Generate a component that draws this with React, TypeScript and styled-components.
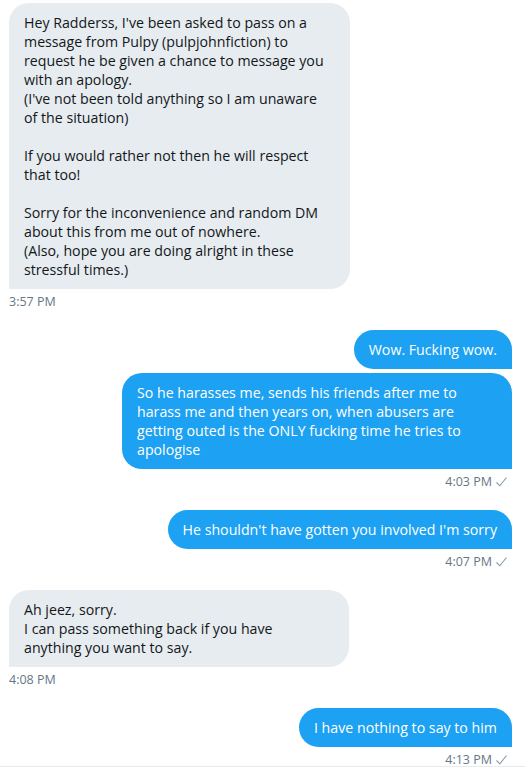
import React from "react"
import styled, { createGlobalStyle } from "styled-components"

const GlobalStyle = createGlobalStyle`
  html, body {
    margin: 0;
    padding: 0;
    background: #ffffff;
  }
  body {
    font-family: "Open Sans", "Noto Sans", sans-serif;
    -webkit-font-smoothing: antialiased;
  }
`

const Conversation = styled.div`
  width: 525px;
  height: 767px;
  box-sizing: border-box;
  padding: 3px 13px 0 9px;
  display: flex;
  flex-direction: column;
  overflow: hidden;
  border-bottom: 1px solid #e6ecf0;
`

const Group = styled.div<{ $mine?: boolean }>`
  display: flex;
  flex-direction: column;
  align-items: ${({ $mine }) => ($mine ? "flex-end" : "flex-start")};
  gap: 4px;
  margin-bottom: 20px;
`

const Bubble = styled.div<{ $mine?: boolean; $width?: number }>`
  box-sizing: border-box;
  padding: 10px 15px;
  font-size: 14.2px;
  line-height: 19px;
  white-space: pre-line;
  width: ${({ $width }) => ($width ? `${$width}px` : "auto")};
  background: ${({ $mine }) => ($mine ? "#1da1f2" : "#e6ecf0")};
  color: ${({ $mine }) => ($mine ? "#ffffff" : "#14171a")};
  border-radius: ${({ $mine }) => ($mine ? "20px 20px 0 20px" : "20px 20px 20px 0")};
`

const Stamp = styled.div<{ $mine?: boolean }>`
  display: flex;
  align-items: center;
  gap: 3px;
  margin-top: 1px;
  font-size: 12.5px;
  line-height: 16px;
  color: #657786;
  padding-right: ${({ $mine }) => ($mine ? "4px" : "0")};
`

const Tick = () => (
  <svg width="13" height="12" viewBox="0 0 13 12" fill="none">
    <path d="M1.5 6.5 L4.8 9.8 L11.5 1.5" stroke="#8899a6" strokeWidth="1.1" />
  </svg>
)

type Msg = { text: string; width?: number }
type Block = { mine?: boolean; time: string; msgs: Msg[] }

const blocks: Block[] = [
  {
    time: "3:57 PM",
    msgs: [
      {
        width: 341,
        text:
          "Hey Radderss, I've been asked to pass on a\nmessage from Pulpy (pulpjohnfiction) to\nrequest he be given a chance to message you\nwith an apology.\n(I've not been told anything so I am unaware\nof the situation)\n\nIf you would rather not then he will respect\nthat too!\n\nSorry for the inconvenience and random DM\nabout this from me out of nowhere.\n(Also, hope you are doing alright in these\nstressful times.)",
      },
    ],
  },
  {
    mine: true,
    time: "4:03 PM",
    msgs: [
      { text: "Wow. Fucking wow." },
      {
        width: 390,
        text:
          "So he harasses me, sends his friends after me to\nharass me and then years on, when abusers are\ngetting outed is the ONLY fucking time he tries to\napologise",
      },
    ],
  },
  {
    mine: true,
    time: "4:07 PM",
    msgs: [{ text: "He shouldn't have gotten you involved I'm sorry" }],
  },
  {
    time: "4:08 PM",
    msgs: [
      {
        width: 340,
        text: "Ah jeez, sorry.\nI can pass something back if you have\nanything you want to say.",
      },
    ],
  },
  {
    mine: true,
    time: "4:13 PM",
    msgs: [{ text: "I have nothing to say to him" }],
  },
]

export default function App() {
  return (
    <>
      <GlobalStyle />
      <Conversation>
        {blocks.map((b, i) => (
          <Group key={i} $mine={b.mine}>
            {b.msgs.map((m, j) => (
              <Bubble key={j} $mine={b.mine} $width={m.width}>
                {m.text}
              </Bubble>
            ))}
            <Stamp $mine={b.mine}>
              {b.time}
              {b.mine && <Tick />}
            </Stamp>
          </Group>
        ))}
      </Conversation>
    </>
  )
}
